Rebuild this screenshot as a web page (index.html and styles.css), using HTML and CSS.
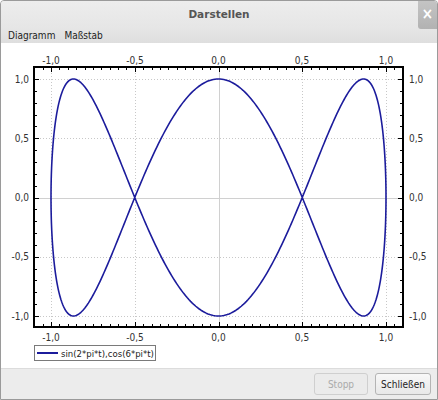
FILE: index.html
```html
<!DOCTYPE html>
<html>
<head>
<meta charset="utf-8">
<link rel="stylesheet" href="styles.css">
</head>
<body>
<div class="window">
  <div class="titlebar">
    <span class="title">Darstellen</span>
    <span class="close">×</span>
  </div>
  <div class="menubar">
    <span class="menu">Diagramm</span>
    <span class="menu">Maßstab</span>
  </div>
  <div class="content">
    <svg class="plot" width="436" height="300" viewBox="1 43 436 300">
      <g id="grid"></g>
      <g id="ticks"></g>
      <path id="curve" fill="none" stroke="#1c1c9c" stroke-width="1.6" stroke-linejoin="round"></path>
      <rect x="34" y="67" width="369" height="260" fill="none" stroke="#000" stroke-width="2"></rect>
      <g class="lbl top">
        <text x="51" y="64">-1,0</text>
        <text x="135" y="64">-0,5</text>
        <text x="218.5" y="64">0,0</text>
        <text x="302" y="64">0,5</text>
        <text x="386" y="64">1,0</text>
      </g>
      <g class="lbl top">
        <text x="51" y="341">-1,0</text>
        <text x="135" y="341">-0,5</text>
        <text x="218.5" y="341">0,0</text>
        <text x="302" y="341">0,5</text>
        <text x="386" y="341">1,0</text>
      </g>
      <g class="lbl left">
        <text x="29" y="82.5">1,0</text>
        <text x="29" y="141.5">0,5</text>
        <text x="29" y="201">0,0</text>
        <text x="29" y="260">-0,5</text>
        <text x="29" y="319.5">-1,0</text>
      </g>
      <g class="lbl right">
        <text x="409" y="82.5">1,0</text>
        <text x="409" y="141.5">0,5</text>
        <text x="409" y="201">0,0</text>
        <text x="409" y="260">-0,5</text>
        <text x="409" y="319.5">-1,0</text>
      </g>
    </svg>
    <div class="legend">
      <span class="swatch"></span>
      <span class="legend-text">sin(2*pi*t),cos(6*pi*t)</span>
    </div>
  </div>
  <div class="footer">
    <button class="btn disabled">Stopp</button>
    <button class="btn">Schließen</button>
  </div>
</div>
<script src="script.js"></script>
</body>
</html>
```

FILE: styles.css
```css
html, body {
  margin: 0;
  padding: 0;
  background: #ffffff;
}
body {
  font-family: "DejaVu Sans Condensed", "DejaVu Sans", sans-serif;
  width: 438px;
  height: 400px;
  overflow: hidden;
}
.window {
  box-sizing: border-box;
  width: 438px;
  height: 400px;
  border: 1px solid #9a9a9a;
  border-radius: 4px 4px 0 0;
  display: flex;
  flex-direction: column;
  background: #ececec;
  overflow: hidden;
}
.titlebar {
  height: 26px;
  flex: none;
  display: flex;
  align-items: center;
  justify-content: center;
  background: linear-gradient(#ededed, #e6e6e6);
  position: relative;
}
.title {
  font-family: "DejaVu Sans", sans-serif;
  font-size: 10.5px;
  font-weight: bold;
  color: #555;
  margin-top: -1px;
}
.close {
  position: absolute;
  right: 0;
  top: 0;
  width: 19px;
  height: 28px;
  background: linear-gradient(#c4c4c4, #b2b2b2);
  border-radius: 0 0 0 3px;
  color: #fff;
  font-size: 15px;
  font-weight: bold;
  line-height: 26px;
  text-align: center;
}
.menubar {
  height: 16px;
  flex: none;
  display: flex;
  align-items: center;
  gap: 9px;
  padding-left: 7px;
  background: linear-gradient(#e6e6e6, #dedede);
}
.menu {
  font-size: 10px;
  color: #222;
}
.content {
  background: #fff;
  height: 325px;
  flex: none;
  display: flex;
  flex-direction: column;
}
.plot {
  display: block;
  flex: none;
}
.lbl text {
  font-size: 10px;
  fill: #333;
  font-family: "DejaVu Sans Condensed", "DejaVu Sans", sans-serif;
}
.lbl.top text { text-anchor: middle; }
.lbl.left text { text-anchor: end; }
.lbl.right text { text-anchor: start; }
.legend {
  margin: 2px 0 0 33px;
  width: 122px;
  height: 16px;
  box-sizing: border-box;
  border: 1px solid #7a7a7a;
  display: flex;
  align-items: center;
  gap: 3px;
  padding-left: 2px;
}
.swatch {
  flex: none;
  width: 21px;
  height: 2px;
  background: #1c1c9c;
}
.legend-text {
  font-size: 9.5px;
  color: #222;
  white-space: nowrap;
}
.footer {
  flex: 1;
  display: flex;
  justify-content: flex-end;
  align-items: flex-start;
  gap: 7px;
  padding: 4px 6px 0 0;
  background: #ececec;
  border-top: 1px solid #dcdcdc;
}
.btn {
  height: 22px;
  box-sizing: border-box;
  border: 1px solid #b4b4b4;
  border-radius: 3px;
  background: linear-gradient(#f8f8f8, #e8e8e8);
  font-family: "DejaVu Sans Condensed", "DejaVu Sans", sans-serif;
  font-size: 10px;
  color: #222;
  padding: 0;
  width: 56px;
}
.btn.disabled {
  width: 54px;
  color: #aaa;
  border-color: #cfcfcf;
  background: #ebebeb;
}
```

FILE: script.js
```js
(function () {
  var NS = "http://www.w3.org/2000/svg";
  function px(x) { return 218.5 + 167.5 * x; }
  function py(y) { return 197.5 - 118.5 * y; }
  var d = "";
  var N = 600;
  for (var i = 0; i <= N; i++) {
    var t = i / N;
    var x = Math.sin(2 * Math.PI * t), y = Math.cos(6 * Math.PI * t);
    d += (i === 0 ? "M" : "L") + px(x).toFixed(2) + " " + py(y).toFixed(2);
  }
  document.getElementById("curve").setAttribute("d", d + "Z");

  function line(g, x1, y1, x2, y2, stroke, dash, w) {
    var l = document.createElementNS(NS, "line");
    l.setAttribute("x1", x1); l.setAttribute("y1", y1);
    l.setAttribute("x2", x2); l.setAttribute("y2", y2);
    l.setAttribute("stroke", stroke);
    l.setAttribute("stroke-width", w || 1);
    if (dash) l.setAttribute("stroke-dasharray", dash);
    g.appendChild(l);
  }
  var grid = document.getElementById("grid");
  var ticks = document.getElementById("ticks");
  var L = 34, R = 403, T = 67, B = 327;
  var majors = [-1, -0.5, 0, 0.5, 1];
  majors.forEach(function (v) {
    var X = Math.round(px(v)) + 0.5, Y = Math.round(py(v)) + 0.5;
    if (v === 0) {
      line(grid, X, T, X, B, "#d0d0d0");
      line(grid, L, Y, R, Y, "#d0d0d0");
    } else {
      line(grid, X, T, X, B, "#c8c8c8", "1 2");
      line(grid, L, Y, R, Y, "#c8c8c8", "1 2");
    }
  });
  for (var k = -22; k <= 22; k++) {
    var v = k * 0.05;
    var X = Math.round(px(v)) + 0.5;
    if (X <= L + 1 || X >= R - 1) continue;
    var len = (k % 10 === 0) ? 5 : 3;
    line(ticks, X, T, X, T + len, "#000");
    line(ticks, X, B, X, B - len, "#000");
  }
  for (var k = -11; k <= 11; k++) {
    var v = k * 0.1;
    var Y = Math.round(py(v)) + 0.5;
    if (Y <= T + 1 || Y >= B - 1) continue;
    var len = (k % 5 === 0) ? 5 : 3;
    line(ticks, L, Y, L + len, Y, "#000");
    line(ticks, R, Y, R - len, Y, "#000");
  }
})();
```
